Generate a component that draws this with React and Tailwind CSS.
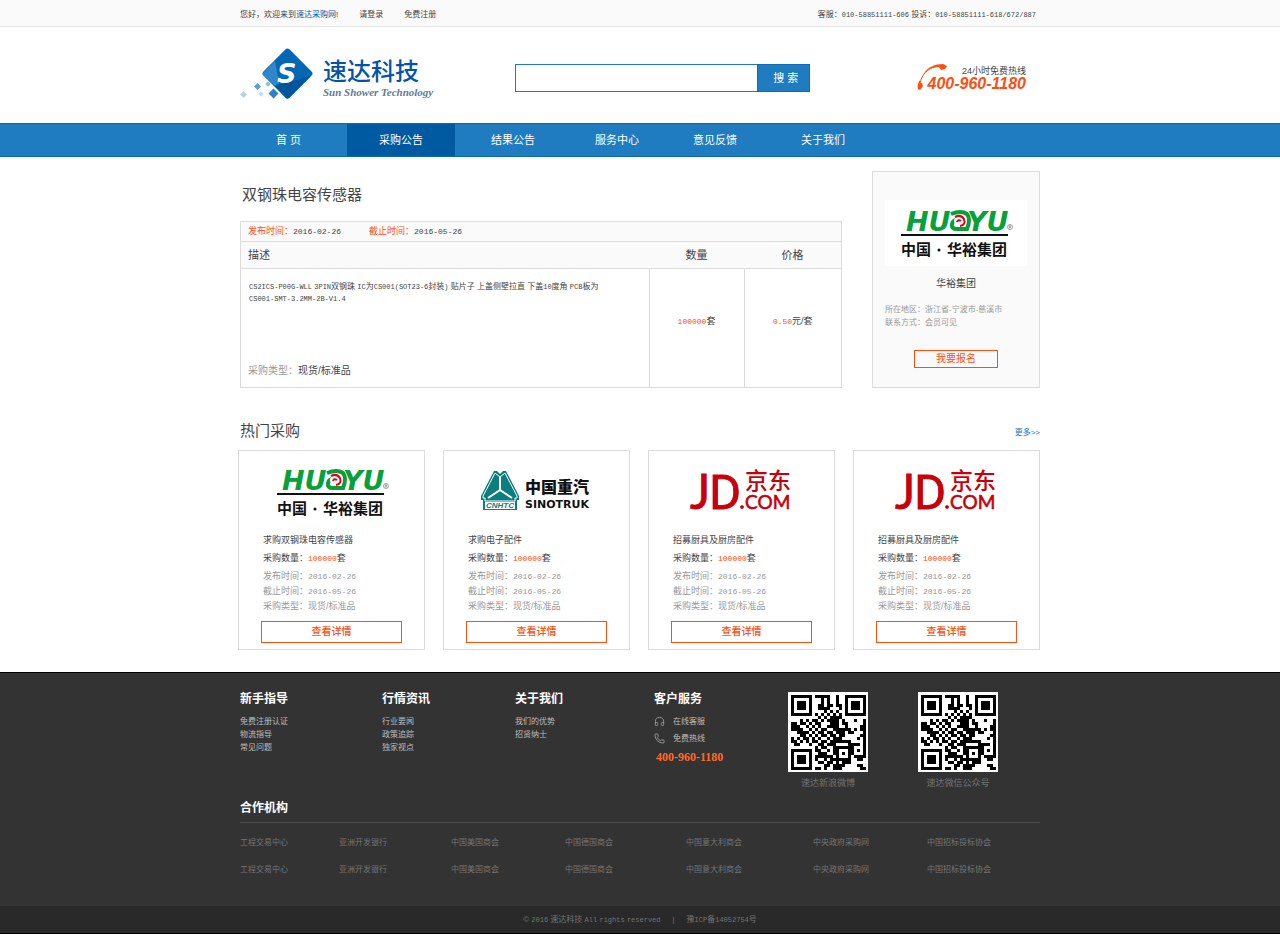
import React, { useState } from "react";
import { Headphones, Phone } from "lucide-react";

const navItems = [
  { label: "首 页", pad: "pl-9 pr-[46px]" },
  { label: "采购公告", pad: "px-8" },
  { label: "结果公告", pad: "pl-9 pr-8" },
  { label: "服务中心", pad: "pl-7 pr-[26px]" },
  { label: "意见反馈", pad: "pl-7 pr-8" },
  { label: "关于我们", pad: "px-8" },
];

const products = [
  { id: 1, logo: "huayu", title: "求购双钢珠电容传感器" },
  { id: 2, logo: "sinotruk", title: "求购电子配件" },
  { id: 3, logo: "jd", title: "招募厨具及厨房配件" },
  { id: 4, logo: "jd", title: "招募厨具及厨房配件" },
];

const footerLinks = [
  { title: "新手指导", width: "w-[142px]", links: ["免费注册认证", "物流指导", "常见问题"] },
  { title: "行情资讯", width: "w-[133px]", links: ["行业要闻", "政策追踪", "独家视点"] },
  { title: "关于我们", width: "w-[139px]", links: ["我们的优势", "招贤纳士"] },
];

const partners = [
  "工程交易中心",
  "亚洲开发银行",
  "中国美国商会",
  "中国德国商会",
  "中国意大利商会",
  "中央政府采购网",
  "中国招标投标协会",
];

const qrRows = [
  "1111111011111001001111111",
  "1000001000101001001000001",
  "1011101000101001001011101",
  "1011101001101101101011101",
  "1011101001111000101011101",
  "1000001000010101001000001",
  "1111111010101010101111111",
  "0000000001010111100000000",
  "0001010110101111010001001",
  "1101101011000111011000001",
  "1110010101001111001000011",
  "1111001010110011111101011",
  "0011110101101101110110001",
  "0001101010110110110000011",
  "1010110101001011100000101",
  "1101010110110111111100001",
  "0110001001101110000111101",
  "0000000010110011111110001",
  "1111111011001011000110101",
  "1000001001110011010110001",
  "1011101011111101000101111",
  "1011101010010111111100110",
  "1011101001101101011100000",
  "1000001000011011110000110",
  "1111111011010011100000011",
];

// latin runs sit narrower than the chinese glyphs around them
function Mixed({ text }) {
  return text.split(/([\x21-\x7e]+)/).map((part, index) =>
    index % 2 === 1 ? (
      <span key={index} className="font-['Liberation_Mono',monospace] text-[7px]">{part}</span>
    ) : (
      part
    )
  );
}

function SudaLogo() {
  return (
    <a href="#" className="flex items-start" aria-label="速达科技">
      <svg width="76" height="60" viewBox="0 0 76 60">
        <rect x="29" y="8" width="37" height="37" rx="3" fill="#0467b5" transform="rotate(45 47.5 26.5)" />
        <path d="M23 26 L35 14 L39 36 L35 39 L23 28Z" fill="#2f86cb" />
        <path d="M35 39 L71 29 L49 51 Q47.5 52.5 46 51Z" fill="#01569b" />
        <text x="37" y="36" fill="#fff" fontSize="27" fontStyle="italic" fontWeight="700" fontFamily="'DejaVu Sans', sans-serif">S</text>
        <rect x="30" y="43" width="7" height="7" fill="#2b82c8" transform="rotate(45 33.5 46.5)" />
        <rect x="15" y="37" width="5" height="5" fill="#5b9fd4" transform="rotate(45 17.5 39.5)" />
        <rect x="26" y="35" width="4" height="4" fill="#90bee2" transform="rotate(45 28 37)" />
        <rect x="19" y="45" width="4" height="4" fill="#c4def1" transform="rotate(45 21 47)" />
        <rect x="1" y="45" width="5" height="5" fill="#b6d5ed" transform="rotate(45 3.5 47.5)" />
      </svg>
      <div className="ml-[7px] pt-3">
        <div className="text-[24px] leading-[26px] font-medium text-[#0353ab]">速达科技</div>
        <div className="font-['Liberation_Serif',serif] text-[11px] leading-[14px] font-bold italic text-[#5c7c92]">
          Sun Shower Technology
        </div>
      </div>
    </a>
  );
}

function HuayuLogo() {
  return (
    <svg width="112" height="50" viewBox="0 0 112 50" className="overflow-visible" role="img" aria-label="华裕集团">
      <g fill="#07a03a" fontFamily="'DejaVu Sans', sans-serif" fontWeight="700" fontStyle="italic" fontSize="27">
        <text x="6" y="23">HU</text>
        <text x="67" y="23">YU</text>
      </g>
      <path d="M51 6 Q61 2 67 6 Q71 11 67 21 H57 Q51 21 52 16 Q53 12 57 12" fill="none" stroke="#07a03a" strokeWidth="4" />
      <ellipse cx="60" cy="13" rx="6" ry="5" fill="#fff" />
      <path d="M55 9 Q61 6 64 11 Q66 17 60 18 M57 14 Q58 11 61 13" fill="none" stroke="#e60012" strokeWidth="2" />
      <circle cx="110" cy="19" r="2.5" fill="none" stroke="#666" strokeWidth="0.6" />
      <path d="M109.3 20.5 V17.7 H110.6 V19 H109.3 M110.2 19 L110.8 20.5" fill="none" stroke="#666" strokeWidth="0.5" />
      <rect x="1" y="26" width="107" height="2" fill="#111" />
      <text y="47" fontSize="15" fontWeight="700" fill="#111" fontFamily="'Noto Sans CJK SC', sans-serif">
        <tspan x="1">中国</tspan>
        <tspan x="47">华裕集团</tspan>
      </text>
      <circle cx="39" cy="42" r="1.5" fill="#111" />
    </svg>
  );
}

function SinotrukLogo() {
  return (
    <svg width="112" height="42" viewBox="0 0 112 42" className="overflow-visible" role="img" aria-label="中国重汽">
      <path d="M13 0 H16 L19 3 L22 0 H25 L38 25 V29 H36 V39 H2 V29 H0 V25Z" fill="#0b7f80" />
      <path d="M14 2 L19 6 L24 2 L36 25 V27 H34 V30 H4 V27 H2 V25Z" fill="none" stroke="#fff" strokeWidth="1" />
      <path d="M19 6 V19 L7 27 M19 19 L31 27" fill="none" stroke="#fff" strokeWidth="2" />
      <rect x="4" y="31" width="30" height="7" fill="#fff" />
      <text x="5" y="37" fontSize="8" fontWeight="700" fontStyle="italic" fill="#0b7f80" fontFamily="'Liberation Sans', sans-serif">CNHTC</text>
      <text x="44" y="22" fontSize="16" fontWeight="900" fill="#111" fontFamily="'Noto Sans CJK SC', sans-serif">中国重汽</text>
      <text x="44" y="37" fontSize="11" fontWeight="700" fill="#111" fontFamily="'DejaVu Sans', sans-serif">SINOTRUK</text>
    </svg>
  );
}

function JdLogo() {
  return (
    <svg width="102" height="42" viewBox="0 0 102 42" className="overflow-visible" role="img" aria-label="京东">
      <g fill="#c7000b" stroke="#c7000b" strokeWidth="0.8" fontFamily="Roboto, sans-serif">
        <text x="-1" y="38" fontSize="48" fontFamily="Lato, sans-serif">J</text>
        <text x="18" y="38" fontSize="49">D</text>
        <circle cx="51" cy="36" r="1.5" />
        <text x="54" y="18" fontSize="23" strokeWidth="0" fontWeight="500" fontFamily="'Noto Sans CJK SC', sans-serif">京东</text>
        <text x="54" y="38" fontSize="19" strokeWidth="0.6" fontFamily="Lato, sans-serif">COM</text>
      </g>
    </svg>
  );
}

const logos = {
  huayu: <HuayuLogo />,
  sinotruk: <SinotrukLogo />,
  jd: <JdLogo />,
};

function QrCode({ caption }) {
  return (
    <figure className="flex w-20 flex-col items-center">
      <svg width="80" height="80" viewBox="0 0 80 80" role="img" aria-label={caption} shapeRendering="crispEdges">
        <rect width="80" height="80" fill="#fff" />
        {qrRows.map((row, y) =>
          row.split("").map((cell, x) =>
            cell === "1" ? <rect key={`${x}_${y}`} x={3 + x * 3} y={3 + y * 3} width="3" height="3" fill="#000" /> : null
          )
        )}
      </svg>
      <figcaption className="mt-[3px] text-[9px] leading-4 whitespace-nowrap text-[#747474]">{caption}</figcaption>
    </figure>
  );
}

function ProductCard({ product }) {
  return (
    <article className="border border-[#dcdcdc] px-[22px] pt-3.5 pb-1.5">
      <div className="flex h-[54px] items-center justify-center">{logos[product.logo]}</div>
      <div className="mt-3 px-0.5 text-[9px] text-[#444]">
        <h3 className="leading-[18px]">{product.title}</h3>
        <p className="leading-[18px]">
          采购数量：<span className="font-['Liberation_Mono',monospace] text-[8px] text-[#ff4e0d]">100000</span>套
        </p>
        <div className="pt-px leading-[15px] text-[#999]">
          <p>发布时间：<span className="font-['Liberation_Mono',monospace] text-[8px]">2016-02-26</span></p>
          <p>截止时间：<span className="font-['Liberation_Mono',monospace] text-[8px]">2016-05-26</span></p>
          <p>采购类型：现货/标准品</p>
        </div>
      </div>
      <button type="button" className="mt-[7px] block h-[22px] w-full cursor-pointer border border-[#ff4e0d] text-[10px] leading-5 font-medium text-[#ff4e0d]">
        查看详情
      </button>
    </article>
  );
}

export default function App() {
  const [keyword, setKeyword] = useState("");
  const [active, setActive] = useState(1);

  return (
    <div lang="zh-CN" className="bg-white font-['Liberation_Sans','Noto_Sans_CJK_SC',sans-serif] text-[#444]">
      <div className="border-b border-[#e6e6e6] bg-[#fafafa]">
        <div className="mx-auto flex h-[26px] max-w-[800px] items-center pt-1 text-[8px]">
          <span>您好，欢迎来到<a href="#" className="text-[#0459a8]">速达采购网</a>!</span>
          <a href="#" className="ml-[21px]">请登录</a>
          <a href="#" className="ml-[21px]">免费注册</a>
          <span className="mr-1 ml-auto"><Mixed text="客服：010-58851111-606 投诉：010-58851111-618/672/887" /></span>
        </div>
      </div>

      <header className="mx-auto flex h-24 max-w-[800px] items-center pt-1">
        <SudaLogo />
        <form className="ml-[82px] flex pt-0.5" onSubmit={(e) => e.preventDefault()}>
          <input
            type="text"
            aria-label="搜索"
            value={keyword}
            onChange={(e) => setKeyword(e.target.value)}
            className="h-7 w-[242px] border border-r-0 border-[#207cc1] bg-white px-2 text-[11px] outline-none"
          />
          <button type="submit" className="h-7 w-[53px] cursor-pointer border border-[#0c6cb7] bg-[#207cc1] pl-1 text-[11px] text-white">
            搜 索
          </button>
        </form>
        <div className="mr-3.5 ml-auto flex items-start pt-0.5">
          <svg width="31" height="27" viewBox="0 0 31 27" className="-mr-5">
            <path d="M3 20 C4 11 11 4 20 2" fill="none" stroke="#ff4e0d" strokeWidth="1" />
            <path d="M6 10 C11 3 18 0 26 0 L30 2 L28 5 L24 6 L22 3 C16 3 11 5 6 10Z" fill="#ff4e0d" />
            <path d="M3 16 C1 19 0 22 1 25 L3 26 L6 22 L5 19 L3 19Z" fill="#ff4e0d" />
          </svg>
          <div className="pt-0.5 text-right">
            <div className="text-[9px] leading-[10px]">24小时免费热线</div>
            <div className="text-[16px] leading-4 font-bold italic text-[#ff4e0d]">400-960-1180</div>
          </div>
        </div>
      </header>

      <nav className="border-y border-[#0c6cb7] bg-[#207cc1]">
        <ul className="mx-auto flex max-w-[800px] text-[11px] leading-8 text-white">
          {navItems.map((item, index) => (
            <li key={item.label} className={active === index ? "bg-[#005aa1]" : ""}>
              <a href="#" className={`block ${item.pad}`} onClick={() => setActive(index)}>{item.label}</a>
            </li>
          ))}
        </ul>
      </nav>

      <main className="mx-auto max-w-[800px]">
        <div className="flex items-start justify-between pt-3.5">
          <section className="w-[602px]">
            <h1 className="px-0.5 pt-3 pb-3.5 text-[15px] leading-6">双钢珠电容传感器</h1>
            <div className="border border-[#dcdcdc]">
              <div className="flex gap-7 border-b border-[#dcdcdc] bg-[#fafafa] px-[7px] text-[9px] leading-[19px]">
                <p><span className="text-[#ff4e0d]">发布时间：</span><span className="font-['Liberation_Mono',monospace] text-[8px]">2016-02-26</span></p>
                <p><span className="text-[#ff4e0d]">截止时间：</span><span className="font-['Liberation_Mono',monospace] text-[8px]">2016-05-26</span></p>
              </div>
              <table className="w-full table-fixed">
                <thead>
                  <tr className="border-b border-[#dcdcdc] bg-[#fafafa] text-[11px] leading-[26px]">
                    <th scope="col" className="px-[7px] text-left font-normal">描述</th>
                    <th scope="col" className="w-[95px] font-normal">数量</th>
                    <th scope="col" className="w-[97px] font-normal">价格</th>
                  </tr>
                </thead>
                <tbody>
                  <tr className="text-[9px]">
                    <td className="px-[7px] pt-3 pb-2 align-top">
                      <p className="px-px text-[8px] leading-[12px]">
                        <Mixed text="CS2ICS-P00G-WLL 3PIN双钢珠 IC为CS001(SOT23-6封装) 贴片子 上盖侧壁拉直 下盖10度角 PCB板为" />
                        <br />
                        <Mixed text="CS001-SMT-3.2MM-2B-V1.4" />
                      </p>
                      <p className="mt-[58px] text-[10px] leading-4">
                        <span className="text-[#999]">采购类型：</span>现货/标准品
                      </p>
                    </td>
                    <td className="border-l border-[#dcdcdc] pb-3 text-center">
                      <span className="font-['Liberation_Mono',monospace] text-[8px] text-[#ff4e0d]">100000</span>套
                    </td>
                    <td className="border-l border-[#dcdcdc] pb-3 text-center">
                      <span className="font-['Liberation_Mono',monospace] text-[8px] text-[#ff4e0d]">0.50</span>元/套
                    </td>
                  </tr>
                </tbody>
              </table>
            </div>
          </section>

          <aside className="flex w-[168px] flex-col border border-[#dcdcdc] bg-[#fafafa] px-3 pt-7 pb-[19px]">
            <div className="flex h-[66px] items-center justify-center bg-white"><HuayuLogo /></div>
            <h2 className="mt-2.5 text-center text-[10px] leading-4">华裕集团</h2>
            <div className="mt-[11px] text-[8px] leading-[13px] text-[#999]">
              <p>所在地区：浙江省-宁波市-慈溪市</p>
              <p>联系方式：会员可见</p>
            </div>
            <button type="button" className="mt-[21px] h-[18px] w-[84px] cursor-pointer self-center border border-[#ff4e0d] text-[10px] leading-4 text-[#ff4e0d]">
              我要报名
            </button>
          </aside>
        </div>

        <section className="pt-[31px]">
          <div className="flex items-center justify-between">
            <h2 className="text-[15px] leading-6">热门采购</h2>
            <a href="#" className="pt-1 text-[8px] text-[#207cc1]">更多&gt;&gt;</a>
          </div>
          <div className="mt-[7px] -ml-0.5 grid grid-cols-4 gap-[18px]">
            {products.map((product) => (
              <ProductCard key={product.id} product={product} />
            ))}
          </div>
        </section>
      </main>

      <footer className="mt-[22px] border-y border-black bg-[#333] text-[8px] text-[#bbb]">
        <div className="mx-auto max-w-[800px]">
          <div className="flex pt-[18px]">
            {footerLinks.map((col) => (
              <div key={col.title} className={col.width}>
                <h3 className="text-[12px] leading-4 font-bold text-white">{col.title}</h3>
                <ul className="mt-2 leading-[13px]">
                  {col.links.map((link) => (
                    <li key={link}><a href="#">{link}</a></li>
                  ))}
                </ul>
              </div>
            ))}
            <div className="w-[134px]">
              <h3 className="text-[12px] leading-4 font-bold text-white">客户服务</h3>
              <a href="#" className="mt-1.5 flex items-center gap-2 leading-[17px]">
                <Headphones size={11} strokeWidth={2} className="text-[#999]" />在线客服
              </a>
              <a href="#" className="flex items-center gap-2 leading-[17px]">
                <Phone size={11} strokeWidth={2} className="text-[#999]" />免费热线
              </a>
              <p className="pl-0.5 font-['Liberation_Serif',serif] text-[12px] leading-5 font-bold text-[#ff6a2b]">400-960-1180</p>
            </div>
            <div className="flex gap-[50px] pt-px">
              <QrCode caption="速达新浪微博" />
              <QrCode caption="速达微信公众号" />
            </div>
          </div>

          <h3 className="mt-[9px] border-b border-[#4a4a4a] pb-1.5 text-[12px] leading-4 font-bold text-white">合作机构</h3>
          <ul className="grid grid-cols-[99px_112px_114px_121px_127px_114px_1fr] gap-y-3.5 pt-[13px] pb-[30px] leading-[13px] text-[#747474]">
            {[...partners, ...partners].map((name, index) => (
              <li key={index}><a href="#">{name}</a></li>
            ))}
          </ul>
        </div>
        <div className="flex h-[27px] justify-center bg-[#292929] leading-[27px] text-[#747474]">
          <span><Mixed text="© 2016 速达科技 All rights reserved" /></span>
          <span className="mx-3">|</span>
          <span><Mixed text="豫ICP备14052754号" /></span>
        </div>
      </footer>
    </div>
  );
}
